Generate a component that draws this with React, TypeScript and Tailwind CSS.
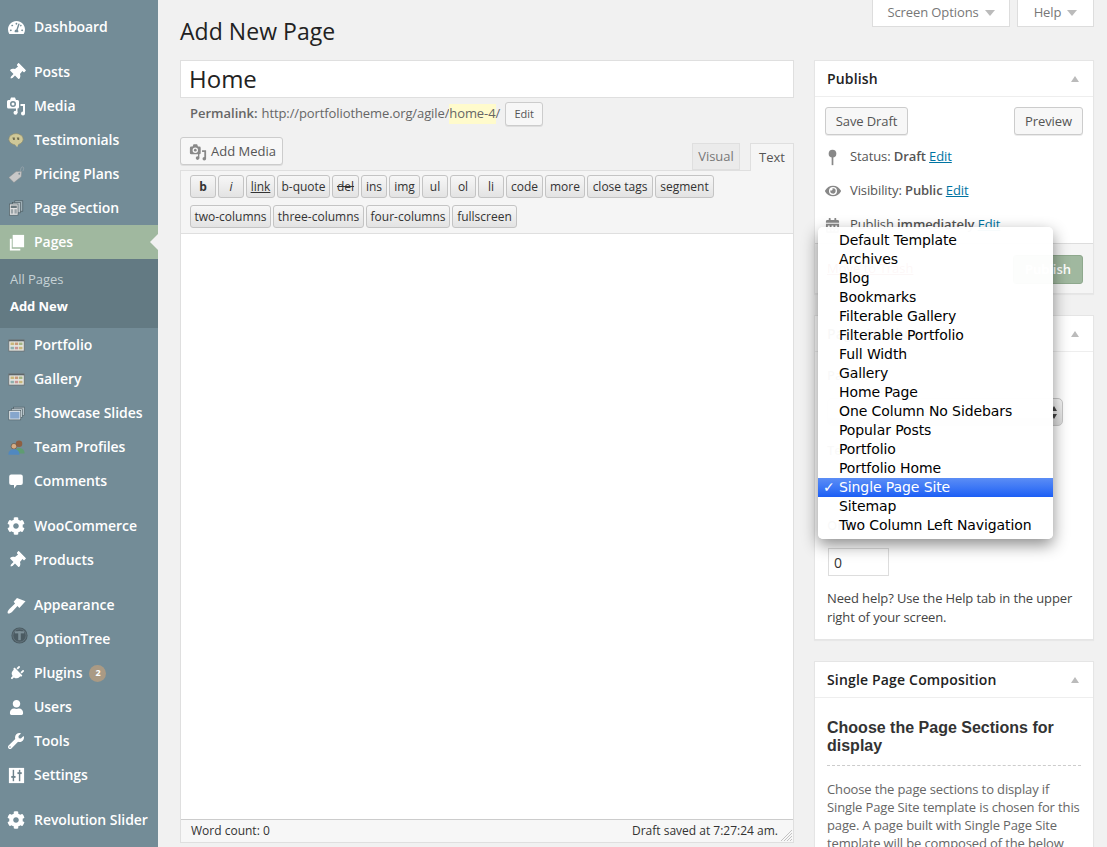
import React from 'react';
import {
  FaTachometerAlt,
  FaThumbtack,
  FaCog,
  FaPlug,
  FaUser,
  FaWrench,
  FaEye,
  FaCalendarAlt,
} from 'react-icons/fa';

const MediaIcon = ({ className }: { className?: string }) => (
  <svg viewBox="0 0 20 20" className={className} fill="currentColor">
    <path d="M1 5.5A1.5 1.5 0 0 1 2.5 4H4l1-2.5h4L10 4h1.5A1.5 1.5 0 0 1 13 5.500V11a1.500 1.500 0 0 1-1.500 1.500h-9A1.500 1.500 0 0 1 1 11zM7 5a3 3 0 1 0 0 6 3 3 0 0 0 0-6z" fillRule="evenodd" />
    <circle cx="7" cy="8" r="1.500" />
    <path d="M14.500 8H19v9.500a2 2 0 1 1-2-2V10h-2.500z" />
    <circle cx="9.500" cy="16.800" r="2" />
    <rect x="10" y="12" width="1.500" height="5" />
  </svg>
);

const PagesIcon = ({ className }: { className?: string }) => (
  <svg viewBox="0 0 20 20" className={className} fill="currentColor">
    <rect x="6" y="2" width="12" height="13" />
    <path d="M3 6h2v10.500h9V18.500H3z" />
  </svg>
);

const BubbleIcon = ({ className }: { className?: string }) => (
  <svg viewBox="0 0 20 20" className={className} fill="currentColor">
    <path d="M4 2h12a2.500 2.500 0 0 1 2.500 2.500v8A2.500 2.500 0 0 1 16 15h-5l-3.500 4.500V15H4a2.500 2.500 0 0 1-2.500-2.500v-8A2.500 2.500 0 0 1 4 2z" />
  </svg>
);

const QuoteIcon = ({ className }: { className?: string }) => (
  <svg viewBox="0 0 20 20" className={className}>
    <ellipse cx="10" cy="9" rx="9" ry="7" fill="#cfc898" stroke="#8e8a68" strokeWidth="0.800" />
    <path d="M8 15l5 0-1.500 4z" fill="#cfc898" />
    <path d="M5.500 7h3v3H6.500zM11 7h3v3h-2z" fill="#6e6a4f" />
  </svg>
);

const TagIcon = ({ className }: { className?: string }) => (
  <svg viewBox="0 0 20 20" className={className}>
    <path d="M1 13.500 9.500 6.500h6.500l-.5 6-8.500 7z" fill="#c8c8c8" stroke="#8a8a8a" strokeWidth="0.500" />
    <circle cx="13.300" cy="9" r="1" fill="#6d838d" />
    <path d="M13.300 9C15 5 15 1 17 1s1.500 3 .5 5" fill="none" stroke="#a3adb1" strokeWidth="0.700" />
  </svg>
);

const SectionIcon = ({ className }: { className?: string }) => (
  <svg viewBox="0 0 20 20" className={className}>
    <rect x="8.500" y="1" width="10" height="13" fill="#9fb0b7" stroke="#46565d" strokeWidth="0.800" />
    <rect x="5.500" y="3" width="10" height="13" fill="#b9c3c7" stroke="#46565d" strokeWidth="0.800" />
    <rect x="2" y="5" width="10.500" height="14" fill="#e2e2e2" stroke="#4b5a60" strokeWidth="0.800" />
    <rect x="3.500" y="7" width="7.500" height="3" fill="#6a787d" />
    <rect x="3.500" y="11.500" width="3" height="5.500" fill="#9aa3a7" />
    <rect x="8" y="11.500" width="3" height="5.500" fill="#9aa3a7" />
  </svg>
);

const GridIcon = ({ className }: { className?: string }) => (
  <svg viewBox="0 0 20 20" className={className}>
    <rect x="1" y="3.500" width="18" height="13" fill="#e4e6e2" stroke="#666" strokeWidth="0.800" />
    <rect x="1" y="3.500" width="18" height="1.600" fill="#5e6669" />
    <rect x="3" y="6.500" width="4" height="3" fill="#c9b77a" />
    <rect x="8" y="6.500" width="4" height="3" fill="#c99a78" />
    <rect x="13" y="6.500" width="4" height="3" fill="#a3b584" />
    <rect x="3" y="11.500" width="4" height="3" fill="#8fb0ae" />
    <rect x="8" y="11.500" width="4" height="3" fill="#c99494" />
    <rect x="13" y="11.500" width="4" height="3" fill="#c9b77a" />
  </svg>
);

const SlidesIcon = ({ className }: { className?: string }) => (
  <svg viewBox="0 0 20 20" className={className}>
    <rect x="6.500" y="2.500" width="13" height="10" fill="#b3c0c6" stroke="#46565d" strokeWidth="0.700" />
    <rect x="4" y="4.500" width="13" height="10" fill="#c3ced3" stroke="#46565d" strokeWidth="0.700" />
    <rect x="1" y="6.500" width="14" height="11" fill="#e6eaec" stroke="#46565d" strokeWidth="0.700" />
    <rect x="2.500" y="8" width="11" height="8" fill="#86a6cc" />
  </svg>
);

const TeamIcon = ({ className }: { className?: string }) => (
  <svg viewBox="0 0 20 20" className={className}>
    <circle cx="13" cy="5.500" r="3.800" fill="#8e5f42" />
    <path d="M8 17c0-5 2-6.500 5-6.500s6.500 1.500 6.500 6.500z" fill="#5f9c72" />
    <circle cx="7" cy="8.500" r="3.300" fill="#d8ad85" stroke="#4b3a2c" strokeWidth="0.600" />
    <path d="M.5 18.500c0-5 3-6.500 6.500-6.500s6.500 1.500 6.500 6.500z" fill="#5088c0" />
  </svg>
);

const BrushIcon = ({ className }: { className?: string }) => (
  <svg viewBox="0 0 20 20" className={className} fill="currentColor">
    <path d="M10.500 2 19.500 5.500 13 12.500 11 10.500 5.500 16.500C4 18 1.800 18.800.8 18.200.2 17.200 1 15.200 2.500 13.700L8.500 8 7 6z" />
  </svg>
);

const OptionTreeIcon = ({ className }: { className?: string }) => (
  <svg viewBox="0 0 20 20" className={className}>
    <circle cx="10" cy="10" r="9.500" fill="#4b5b62" />
    <circle cx="10" cy="10" r="7.800" fill="none" stroke="#6d7f87" strokeWidth="0.800" />
    <rect x="4.500" y="5" width="11" height="2.500" fill="#7c8f97" />
    <rect x="8.500" y="5" width="3" height="10.500" fill="#7c8f97" />
  </svg>
);

const SettingsIcon = ({ className }: { className?: string }) => (
  <svg viewBox="0 0 20 20" className={className}>
    <rect x="2" y="2" width="16" height="16" fill="#fff" />
    <rect x="6" y="4" width="1.500" height="12" fill="#6d838d" />
    <rect x="12.500" y="4" width="1.500" height="12" fill="#6d838d" />
    <rect x="4.500" y="10.500" width="4.500" height="2" fill="#6d838d" />
    <rect x="11" y="6.500" width="4.500" height="2" fill="#6d838d" />
  </svg>
);

const PinSmall = ({ className }: { className?: string }) => (
  <svg viewBox="0 0 20 20" className={className} fill="currentColor">
    <circle cx="10" cy="5.500" r="4.500" />
    <rect x="9" y="8" width="2" height="11" />
  </svg>
);

const Pin = ({ className }: { className?: string }) => <FaThumbtack className={`rotate-45 ${className}`} />;
const Plug = ({ className }: { className?: string }) => <FaPlug className={`rotate-45 ${className}`} />;

type MenuItem = {
  label: string;
  icon: React.FC<{ className?: string }>;
  size: string;
  gap?: boolean;
  badge?: string;
};

const topItems: MenuItem[] = [
  { label: 'Posts', icon: Pin, size: 'w-[17px] h-[17px]', gap: true },
  { label: 'Media', icon: MediaIcon, size: 'w-[20px] h-[20px]' },
  { label: 'Testimonials', icon: QuoteIcon, size: 'w-[16px] h-[16px]' },
  { label: 'Pricing Plans', icon: TagIcon, size: 'w-[17px] h-[17px]' },
  { label: 'Page Section', icon: SectionIcon, size: 'w-[16px] h-[16px]' },
];

const bottomItems: MenuItem[] = [
  { label: 'Portfolio', icon: GridIcon, size: 'w-[17px] h-[17px]' },
  { label: 'Gallery', icon: GridIcon, size: 'w-[17px] h-[17px]' },
  { label: 'Showcase Slides', icon: SlidesIcon, size: 'w-[17px] h-[17px]' },
  { label: 'Team Profiles', icon: TeamIcon, size: 'w-[17px] h-[17px]' },
  { label: 'Comments', icon: BubbleIcon, size: 'w-[16px] h-[16px]' },
  { label: 'WooCommerce', icon: FaCog, size: 'w-[18px] h-[18px]', gap: true },
  { label: 'Products', icon: Pin, size: 'w-[17px] h-[17px]' },
  { label: 'Appearance', icon: BrushIcon, size: 'w-[19px] h-[19px]', gap: true },
  { label: 'OptionTree', icon: OptionTreeIcon, size: 'w-[17px] h-[17px] -mt-[7px] ml-[6px]' },
  { label: 'Plugins', icon: Plug, size: 'w-[15px] h-[15px]', badge: '2' },
  { label: 'Users', icon: FaUser, size: 'w-[15px] h-[15px]' },
  { label: 'Tools', icon: FaWrench, size: 'w-[16px] h-[16px]' },
  { label: 'Settings', icon: SettingsIcon, size: 'w-[19px] h-[19px]' },
  { label: 'Revolution Slider', icon: FaCog, size: 'w-[18px] h-[18px]', gap: true },
];

const MenuRow = ({ item }: { item: MenuItem }) => {
  const Icon = item.icon;
  return (
    <div className={`flex h-[34px] items-center text-[14px] font-semibold tracking-[-0.05px] text-white ${item.gap ? 'mt-[11px]' : ''}`}>
      <span className="flex w-[34px] shrink-0 justify-center pr-[2px]">
        <Icon className={`${item.size} text-white`} />
      </span>
      <span className="-mt-[2px]">{item.label}</span>
      {item.badge && (
        <span className="ml-[7px] flex h-[17px] w-[17px] items-center justify-center rounded-full bg-[#aa9a84] text-[9px] font-bold">
          {item.badge}
        </span>
      )}
    </div>
  );
};

const Sidebar = () => (
  <aside className="h-[847px] w-[158px] shrink-0 bg-[#738c97] pt-[10px]">
    <MenuRow item={{ label: 'Dashboard', icon: FaTachometerAlt, size: 'w-[17px] h-[17px]' }} />
    {topItems.map(item => (
      <MenuRow key={item.label} item={item} />
    ))}
    <div className="relative flex h-[34px] items-center bg-[#a0b89f] text-[14px] font-semibold tracking-[-0.05px] text-white">
      <span className="flex w-[34px] shrink-0 justify-center pr-[2px]">
        <PagesIcon className="h-[19px] w-[19px]" />
      </span>
      <span className="-mt-[2px]">Pages</span>
      <span className="absolute right-0 top-[9px] h-0 w-0 border-y-[8px] border-r-[8px] border-y-transparent border-r-[#f1f1f1]" />
    </div>
    <div className="h-[69px] bg-[#637a83] pl-[10px] pt-[7px] text-[13px] leading-[27px] tracking-[-0.05px]">
      <div className="text-[#c6d2d6]">All Pages</div>
      <div className="font-bold text-white">Add New</div>
    </div>
    {bottomItems.map(item => (
      <MenuRow key={item.label} item={item} />
    ))}
  </aside>
);

const toolbarRowOne = [
  { label: 'b', width: 'w-[26px] font-bold' },
  { label: 'i', width: 'w-[26px] italic' },
  { label: 'link', width: 'w-[29px] underline' },
  { label: 'b-quote', width: 'w-[53px]' },
  { label: 'del', width: 'w-[27px] line-through' },
  { label: 'ins', width: 'w-[26px]' },
  { label: 'img', width: 'w-[31px]' },
  { label: 'ul', width: 'w-[26px]' },
  { label: 'ol', width: 'w-[26px]' },
  { label: 'li', width: 'w-[26px]' },
  { label: 'code', width: 'w-[37px]' },
  { label: 'more', width: 'w-[40px]' },
  { label: 'close tags', width: 'w-[66px]' },
  { label: 'segment', width: 'w-[59px]' },
];

const toolbarRowTwo = [
  { label: 'two-columns', width: 'w-[81px]' },
  { label: 'three-columns', width: 'w-[91px]' },
  { label: 'four-columns', width: 'w-[84px]' },
  { label: 'fullscreen', width: 'w-[65px]' },
];

const ToolButton = ({ label, width }: { label: string; width: string }) => (
  <button className={`h-[23px] rounded-[3px] border border-[#c4c4c4] bg-linear-to-b from-[#f7f7f7] to-[#e3e3e3] text-center text-[12px] leading-[20px] text-[#333] ${width}`}>
    {label}
  </button>
);

const Editor = () => (
  <div className="w-[614px] shrink-0">
    <div className="flex h-[38px] items-center border border-[#dfdfdf] bg-white pl-[8px] text-[24px] text-[#222]">Home</div>
    <div className="mt-[4px] flex h-[24px] items-center pl-[10px] text-[13px] text-[#666]">
      <span className="font-semibold">Permalink:</span>
      <span className="ml-[4px] tracking-[-0.1px]">http://portfoliotheme.org/agile/</span>
      <span className="bg-[#fffbcc] tracking-[-0.1px]">home-4</span>
      <span>/</span>
      <button className="ml-[5px] flex h-[24px] w-[38px] items-center justify-center rounded-[3px] border border-[#ccc] bg-[#f7f7f7] text-[11px] text-[#555] shadow-[0_1px_0_rgba(0,0,0,0.08)]">
        Edit
      </button>
    </div>
    <div className="mt-[11px] flex h-[33px] items-start justify-between">
      <button className="flex h-[28px] w-[103px] items-center gap-[4px] rounded-[3px] border border-[#ccc] bg-[#f7f7f7] pl-[8px] pt-[1px] text-[13px] text-[#555] shadow-[0_1px_0_rgba(0,0,0,0.08)]">
        <MediaIcon className="h-[18px] w-[18px] text-[#888]" />
        Add Media
      </button>
      <div className="mt-[6px] flex items-start">
        <div className="flex h-[27px] w-[48px] items-center justify-center border border-[#dfdfdf] bg-[#ebebeb] text-[13px] text-[#777]">Visual</div>
        <div className="relative z-10 ml-[10px] flex h-[28px] w-[44px] items-center justify-center border border-b-0 border-[#dfdfdf] bg-[#f5f5f5] text-[13px] text-[#555]">Text</div>
      </div>
    </div>
    <div className="border border-[#dfdfdf] bg-white">
      <div className="flex h-[63px] flex-col gap-[7px] border-b border-[#dfdfdf] bg-[#f5f5f5] pl-[9px] pt-[4px]">
        <div className="flex gap-[2px]">
          {toolbarRowOne.map(b => (
            <ToolButton key={b.label} label={b.label} width={b.width} />
          ))}
        </div>
        <div className="flex gap-[2px]">
          {toolbarRowTwo.map(b => (
            <ToolButton key={b.label} label={b.label} width={b.width} />
          ))}
        </div>
      </div>
      <div className="h-[586px] border-b border-[#ccc] bg-white" />
      <div className="relative flex h-[22px] items-center justify-between bg-[#f7f7f7] pl-[10px] pr-[15px] text-[12px] text-[#333]">
        <span>Word count: 0</span>
        <span>Draft saved at 7:27:24 am.</span>
        <svg viewBox="0 0 12 12" className="absolute bottom-[1px] right-[1px] h-[12px] w-[12px]" stroke="#b5b5b5" strokeWidth="0.800">
          <path d="M1 12 12 1M4 12l8-8M7 12l5-5M10 12l2-2" />
        </svg>
      </div>
    </div>
  </div>
);

const BoxHeader = ({ title }: { title: string }) => (
  <div className="flex h-[36px] items-center justify-between border-b border-[#eee] pl-[12px] pr-[14px] text-[14px] font-semibold tracking-[0.17px] text-[#222]">
    {title}
    <span className="h-0 w-0 border-x-[4px] border-b-[6px] border-x-transparent border-b-[#bbb]" />
  </div>
);

const Box = ({ children, className }: { children: React.ReactNode; className: string }) => (
  <div className={`border border-[#e5e5e5] bg-white shadow-[0_1px_1px_rgba(0,0,0,0.04)] ${className}`}>{children}</div>
);

const WpButton = ({ children, className }: { children: React.ReactNode; className: string }) => (
  <button className={`h-[28px] rounded-[3px] border border-[#ccc] bg-[#f7f7f7] pt-[2px] text-[13px] tracking-[-0.1px] text-[#555] shadow-[0_1px_0_rgba(0,0,0,0.08)] ${className}`}>
    {children}
  </button>
);

const SideColumn = () => (
  <div className="ml-[20px] w-[280px] shrink-0">
    <Box className="h-[234px]">
      <BoxHeader title="Publish" />
      <div className="flex h-[146px] flex-col px-[10px] pt-[10px] text-[13px] tracking-[-0.1px] text-[#555]">
        <div className="flex justify-between">
          <WpButton className="w-[83px]">Save Draft</WpButton>
          <WpButton className="w-[69px]">Preview</WpButton>
        </div>
        <div className="mt-[12px] flex h-[20px] items-center">
          <span className="flex w-[25px] justify-start"><PinSmall className="-ml-[1px] h-[17px] w-[17px] text-[#888]" /></span>
          Status:&nbsp;<b className="font-semibold">Draft</b>&nbsp;<span className="text-[#0074a2] underline">Edit</span>
        </div>
        <div className="mt-[14px] flex h-[20px] items-center">
          <span className="flex w-[25px] justify-start"><FaEye className="h-[16px] w-[16px] text-[#888]" /></span>
          Visibility:&nbsp;<b className="font-semibold">Public</b>&nbsp;<span className="text-[#0074a2] underline">Edit</span>
        </div>
        <div className="mt-[14px] flex h-[20px] items-center">
          <span className="flex w-[25px] justify-start"><FaCalendarAlt className="h-[15px] w-[15px] text-[#888]" /></span>
          Publish&nbsp;<b className="font-semibold">immediately</b>&nbsp;<span className="text-[#0074a2] underline">Edit</span>
        </div>
      </div>
      <div className="flex h-[50px] items-center justify-between border-t border-[#ddd] bg-[#f5f5f5] px-[10px] pt-[1px]">
        <span className="pl-[2px] text-[13px] text-[#a00] underline">Move to Trash</span>
        <button className="h-[29px] w-[70px] rounded-[3px] border border-[#8ea88d] bg-[#a0b89f] pt-[1px] text-[13px] font-semibold text-white">Publish</button>
      </div>
    </Box>
    <Box className="mt-[21px] h-[325px]">
      <BoxHeader title="Page Attributes" />
      <div className="px-[12px] pt-[14px] text-[13px] leading-[19px] text-[#444]">
        <div className="font-semibold">Parent</div>
        <div className="mt-[13px] flex h-[28px] w-[236px] justify-end rounded-[5px] border border-[#c8c8c8] bg-linear-to-b from-[#f7f7f7] to-[#dcdcdc]">
          <div className="flex h-full w-[16px] flex-col items-center justify-center gap-[3px]">
            <span className="h-0 w-0 border-x-[3px] border-b-[5px] border-x-transparent border-b-[#444]" />
            <span className="h-0 w-0 border-x-[3px] border-t-[5px] border-x-transparent border-t-[#444]" />
          </div>
        </div>
        <div className="mt-[15px] font-semibold">Template</div>
        <div className="mt-[56px] font-semibold">Order</div>
        <div className="ml-[1px] mt-[13px] flex h-[28px] w-[61px] items-center border border-[#ddd] pl-[5px] text-[14px] text-[#333]">0</div>
        <p className="mt-[13px] tracking-[-0.12px]">Need help? Use the Help tab in the upper right of your screen.</p>
      </div>
    </Box>
    <Box className="mt-[21px]">
      <BoxHeader title="Single Page Composition" />
      <div className="px-[12px] pt-[21px]">
        <h3 className="border-b border-dashed border-[#ccc] pb-[10px] font-['Liberation_Sans',sans-serif] text-[16px] font-bold leading-[18px] text-[#333]">
          Choose the Page Sections for display
        </h3>
        <p className="mt-[14px] text-[13px] leading-[18px] tracking-[-0.13px] text-[#666]">
          Choose the page sections to display if Single Page Site template is chosen for this page. A page built with Single Page Site template will be composed of the below sections.
        </p>
      </div>
    </Box>
  </div>
);

const templates = [
  'Default Template',
  'Archives',
  'Blog',
  'Bookmarks',
  'Filterable Gallery',
  'Filterable Portfolio',
  'Full Width',
  'Gallery',
  'Home Page',
  'One Column No Sidebars',
  'Popular Posts',
  'Portfolio',
  'Portfolio Home',
  'Single Page Site',
  'Sitemap',
  'Two Column Left Navigation',
];

const TemplateMenu = () => (
  <div className="absolute left-[818px] top-[227px] w-[235px] rounded-[5px] bg-white/[.97] py-[4px] font-['DejaVu_Sans',sans-serif] text-[14px] leading-[19px] tracking-[-0.1px] text-black shadow-[0_6px_16px_rgba(0,0,0,0.45)]">
    {templates.map(t =>
      t === 'Single Page Site' ? (
        <div key={t} className="relative h-[19px] bg-linear-to-b from-[#5b8df5] to-[#1b5ef5] pl-[21px] text-white">
          <span className="absolute left-[5px] top-0 text-[14px] font-bold">✓</span>
          {t}
        </div>
      ) : (
        <div key={t} className="h-[19px] pl-[21px]">
          {t}
        </div>
      ),
    )}
  </div>
);

const ScreenTab = ({ label, className }: { label: string; className: string }) => (
  <div className={`flex h-[27px] items-center justify-center gap-[6px] border border-t-0 border-[#ddd] bg-white text-[13px] tracking-[-0.1px] text-[#777] ${className}`}>
    {label}
    <span className="h-0 w-0 border-x-[5px] border-t-[6px] border-x-transparent border-t-[#bbb]" />
  </div>
);

export default function App() {
  return (
    <div className="relative flex h-[847px] w-[1107px] overflow-hidden bg-[#f1f1f1] font-['Open_Sans',sans-serif]">
      <Sidebar />
      <main className="min-w-0 flex-1 pl-[22px]">
        <div className="flex h-[60px] items-start justify-between pr-[13px]">
          <h1 className="mt-[15px] text-[23px] leading-[32px] tracking-[0.05px] text-[#222]">Add New Page</h1>
          <div className="flex gap-[7px]">
            <ScreenTab label="Screen Options" className="w-[138px]" />
            <ScreenTab label="Help" className="w-[77px]" />
          </div>
        </div>
        <div className="flex items-start">
          <Editor />
          <SideColumn />
        </div>
      </main>
      <TemplateMenu />
    </div>
  );
}
